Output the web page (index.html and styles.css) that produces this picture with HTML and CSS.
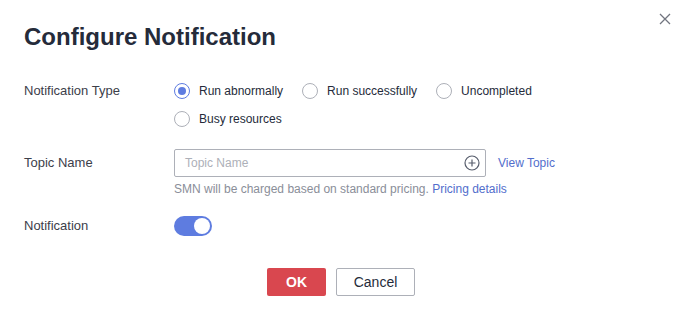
FILE: index.html
```html
<!DOCTYPE html>
<html lang="en">
<head>
  <meta charset="UTF-8">
  <meta name="viewport" content="width=device-width, initial-scale=1.0">
  <title>Configure Notification</title>
  <link rel="stylesheet" href="styles.css">
</head>
<body>
  <div class="dialog">
    <!-- Close button in the corner -->
    <button class="close" aria-label="Close">
      <svg width="12" height="12" viewBox="0 0 12 12">
        <path d="M1 1L11 11M11 1L1 11" stroke="#71757f" stroke-width="1.3" fill="none"/>
      </svg>
    </button>

    <div class="header">
      <h1 class="title">Configure Notification</h1>
    </div>

    <div class="form">
      <!-- Notification type -->
      <div class="row">
        <div class="label label-tall">Notification Type</div>
        <div class="radio-group">
          <label class="radio checked"><span class="dot"></span>Run abnormally</label>
          <label class="radio"><span class="dot"></span>Run successfully</label>
          <label class="radio"><span class="dot"></span>Uncompleted</label>
          <label class="radio"><span class="dot"></span>Busy resources</label>
        </div>
      </div>

      <!-- Topic name -->
      <div class="row row-topic">
        <div class="label label-tall">Topic Name</div>
        <div class="control">
          <div class="input-line">
            <div class="input">
              <span class="placeholder">Topic Name</span>
              <svg class="plus" width="16" height="16" viewBox="0 0 16 16">
                <circle cx="8" cy="8" r="7" stroke="#575d6c" stroke-width="1.2" fill="none"/>
                <path d="M8 4.5V11.5M4.5 8H11.5" stroke="#575d6c" stroke-width="1.2"/>
              </svg>
            </div>
            <a class="link" href="#">View Topic</a>
          </div>
          <div class="hint">SMN will be charged based on standard pricing. <a class="link" href="#">Pricing details</a></div>
        </div>
      </div>

      <!-- Notification switch -->
      <div class="row row-switch">
        <div class="label">Notification</div>
        <div class="switch on"><span class="knob"></span></div>
      </div>
    </div>

    <div class="footer">
      <button class="btn btn-ok">OK</button>
      <button class="btn btn-cancel">Cancel</button>
    </div>
  </div>
</body>
</html>
```

FILE: styles.css
```css
/* Page */
body {
  margin: 0;
  background: #fff;
  font-family: 'Liberation Sans', Arial, sans-serif;
  font-size: 12px;
  color: #252b3a;
}

/* Dialog box */
.dialog {
  position: relative;
  width: 682px;
  height: 317px;
  box-sizing: border-box;
}

.close {
  position: absolute;
  top: 12px;
  right: 10px;
  width: 14px;
  height: 14px;
  padding: 0;
  border: none;
  background: none;
  display: flex;
  align-items: center;
  justify-content: center;
  cursor: pointer;
}

.header {
  padding: 21px 24px 0;
}

.title {
  margin: 0;
  font-size: 24px;
  line-height: 32px;
  font-weight: bold;
  color: #252b3a;
}

/* Form */
.form {
  margin-top: 24px;
  padding: 0 24px;
}

.row {
  display: grid;
  grid-template-columns: 150px 1fr;
}

.row-topic {
  margin-top: 16px;
}

.row-switch {
  margin-top: 18px;
}

.label {
  font-size: 13px;
  color: #3c404a;
  line-height: 20px;
}

.label-tall {
  line-height: 28px;
}

/* Radios */
.radio-group {
  display: flex;
  flex-wrap: wrap;
  max-width: 420px;
  column-gap: 19px;
}

.radio {
  display: flex;
  align-items: center;
  gap: 9px;
  height: 28px;
  color: #252b3a;
  cursor: pointer;
}

.radio .dot {
  width: 16px;
  height: 16px;
  box-sizing: border-box;
  border: 1px solid #adb0b8;
  border-radius: 50%;
  display: flex;
  align-items: center;
  justify-content: center;
}

.radio.checked .dot {
  border-color: #5e7ce0;
}

.radio.checked .dot::after {
  content: "";
  width: 8px;
  height: 8px;
  border-radius: 50%;
  background: #5e7ce0;
}

/* Topic input */
.input-line {
  display: flex;
  align-items: center;
  gap: 12px;
}

.input {
  width: 312px;
  height: 28px;
  box-sizing: border-box;
  border: 1px solid #adb0b8;
  border-radius: 2px;
  padding: 0 5px 0 10px;
  display: flex;
  align-items: center;
  justify-content: space-between;
}

.placeholder {
  color: #adb0b8;
}

.link {
  color: #526ecc;
  text-decoration: none;
}

.hint {
  margin-top: 3px;
  line-height: 18px;
  color: #8a8e99;
}

/* Switch */
.switch {
  width: 38px;
  height: 20px;
  border-radius: 10px;
  background: #dfe1e6;
  display: flex;
  align-items: center;
  padding: 0 2px;
  box-sizing: border-box;
}

.switch.on {
  background: #5e7ce0;
  justify-content: flex-end;
}

.switch .knob {
  width: 16px;
  height: 16px;
  border-radius: 50%;
  background: #fff;
}

/* Footer buttons */
.footer {
  margin-top: 32px;
  display: flex;
  justify-content: center;
  gap: 10px;
}

.btn {
  height: 28px;
  border-radius: 2px;
  font-family: inherit;
  font-size: 14px;
  cursor: pointer;
}

.btn-ok {
  width: 59px;
  border: none;
  background: #d9474f;
  color: #fff;
  font-weight: bold;
}

.btn-cancel {
  width: 79px;
  border: 1px solid #adb0b8;
  background: #fff;
  color: #252b3a;
}
```
